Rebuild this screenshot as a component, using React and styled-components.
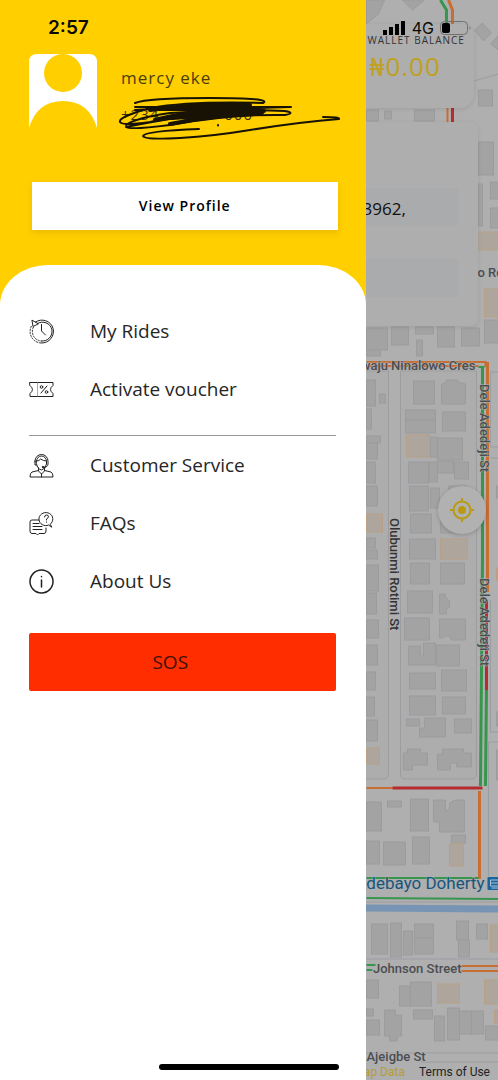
import React from "react";
import styled, { createGlobalStyle } from "styled-components";

const GlobalStyle = createGlobalStyle`
  *, *::before, *::after { box-sizing: border-box; }
  body { margin: 0; background: #fff; font-family: "Open Sans", "Noto Sans", sans-serif; color: #222; }
`;

const Screen = styled.div`
  position: relative;
  display: flex;
  min-height: 100vh;
  overflow: hidden;
`;

const StatusBar = styled.div`
  position: absolute;
  z-index: 3;
  inset: 0 0 auto 0;
  display: flex;
  align-items: center;
  justify-content: space-between;
  padding: 16px 26px 0 48px;
  height: 40px;
  color: #0a0a05;
`;

const Clock = styled.time`
  font: 600 19px/24px Inter, sans-serif;
`;

const Signals = styled.div`
  display: flex;
  align-items: center;
  gap: 6px;
  font: 400 16px/24px Inter, sans-serif;
`;

const HomeIndicator = styled.div`
  position: absolute;
  z-index: 3;
  bottom: 10px;
  left: 32%;
  width: 36%;
  height: 6px;
  border-radius: 3px;
  background: #000;
`;

const Drawer = styled.aside`
  flex: 0 0 73.4%;
  display: flex;
  flex-direction: column;
  background: #fff;
`;

const ProfileHeader = styled.header`
  padding: 54px 28px 75px 29px;
  margin-bottom: -40px;
  background: #ffcf00;
`;

const Profile = styled.div`
  display: flex;
  gap: 24px;
  height: 88px;
`;

const Identity = styled.div`
  position: relative;
  flex: 1;
  padding-top: 12px;
`;

const Name = styled.h1`
  margin: 0;
  font-size: 17px;
  line-height: 24px;
  font-weight: 400;
  letter-spacing: 1px;
  color: #4b3d0a;
`;

const Phone = styled.p`
  display: flex;
  justify-content: space-between;
  width: 132px;
  margin: 12px 0 0;
  font-size: 15px;
  line-height: 24px;
  letter-spacing: 1px;
  color: #3d3208;
`;

const Scribble = styled.svg`
  position: absolute;
  left: -4px;
  top: 40px;
  width: 226px;
  height: 48px;
  overflow: visible;
`;

const ProfileButton = styled.button`
  display: block;
  width: calc(100% - 3px);
  height: 48px;
  margin: 40px 0 0 3px;
  border: 0;
  background: #fff;
  box-shadow: 0 3px 6px rgba(160, 110, 0, 0.2);
  font: 600 14px/24px "Open Sans", sans-serif;
  letter-spacing: 1px;
  color: #000;
`;

const Panel = styled.div`
  flex: 1;
  padding: 37px 30px 40px 29px;
  border-radius: 48px 48px 0 0 / 40px 40px 0 0;
  background: #fff;
`;

const MenuList = styled.ul`
  margin: 0;
  padding: 0;
  list-style: none;
  & + & {
    margin-top: 17px;
    border-top: 1px solid #999;
  }
`;

const MenuLink = styled.a`
  display: flex;
  align-items: center;
  gap: 36px;
  height: 58px;
  font-size: 19px;
  line-height: 28px;
  color: #262626;
  text-decoration: none;
`;

const Icon = styled.svg.attrs({ viewBox: "0 0 25 25", "aria-hidden": true })`
  flex: none;
  width: 25px;
  height: 25px;
  fill: none;
  stroke: #222;
  stroke-width: ${(p) => p.$weight || 1};
  stroke-linecap: round;
  stroke-linejoin: round;
`;

const SosButton = styled.button`
  width: 100%;
  height: 58px;
  margin-top: 23px;
  padding: 0 24px 0 0;
  border: 0;
  border-radius: 2px;
  background: #ff2d00;
  font: 400 19px/28px "Open Sans", sans-serif;
  color: #3a1208;
`;

const MapPane = styled.main`
  position: relative;
  flex: 1;
  min-width: 0;
  display: flex;
  flex-direction: column;
  padding-top: 24px;
  overflow: hidden;
  background: #afafb0;
`;

const MapCanvas = styled.svg`
  position: absolute;
  inset: 0;
  width: 100%;
  height: 100%;
`;

const Card = styled.section`
  position: relative;
  background: #aeaeae;
  box-shadow: 0 1px 4px rgba(0, 0, 0, 0.1);
`;

const WalletCard = styled(Card)`
  height: 84px;
  margin-right: 24px;
  padding: 8px 0 0 2px;
  border-radius: 0 12px 14px 0;
  white-space: nowrap;
`;

const WalletLabel = styled.h2`
  margin: 0;
  font-size: 10px;
  line-height: 16px;
  font-weight: 500;
  letter-spacing: 1px;
  color: #333;
`;

const Balance = styled.p`
  margin: 2px 0 0 2px;
  font-size: 26px;
  line-height: 32px;
  letter-spacing: 1px;
  color: #c0a020;
`;

const TripCard = styled(Card)`
  display: flex;
  flex-direction: column;
  gap: 33px;
  height: 204px;
  margin: 14px 20px 0 0;
  padding: 66px 20px 0 0;
  border-radius: 0 6px 6px 0;
`;

const Field = styled.div`
  height: 38px;
  background: #a9abad;
  border-radius: 0 3px 3px 0;
  font-size: 17px;
  line-height: 42px;
  color: #111;
  text-indent: -3px;
`;

const LocateButton = styled.button`
  position: relative;
  display: grid;
  place-items: center;
  width: 48px;
  height: 48px;
  margin: 160px 12px 0 auto;
  padding: 0;
  border: 0;
  border-radius: 50%;
  background: #b1b1b1;
  box-shadow: 0 1px 4px rgba(0, 0, 0, 0.2);
`;

const MapLinks = styled.footer`
  position: relative;
  display: flex;
  justify-content: flex-end;
  gap: 14px;
  margin-top: auto;
  padding-right: 8px;
  white-space: nowrap;
  font: 400 12px/16px Roboto, sans-serif;
`;

const MapLink = styled.a`
  color: ${(p) => (p.$accent ? "#b79d35" : "#222")};
  text-decoration: none;
`;

const buildings = [
  [366, 110, 12, 11], [384, 111, 7, 8], [414, 110, 20, 11], [478, 90, 14, 16],
  [478, 142, 15, 33], [478, 184, 4, 42], [490, 182, 8, 17], [490, 208, 8, 20],
  [366, 328, 21, 22], [391, 327, 17, 18], [415, 327, 18, 7], [437, 327, 17, 20],
  [461, 328, 18, 18], [484, 320, 14, 23], [416, 340, 6, 16], [366, 350, 14, 6],
  [366, 380, 9, 26], [379, 394, 6, 9], [366, 409, 5, 20], [366, 436, 14, 7], [366, 443, 11, 16],
  [366, 462, 9, 21], [366, 486, 11, 20], [366, 538, 9, 10], [366, 550, 11, 9],
  [413, 381, 21, 23], [405, 410, 30, 10], [405, 420, 30, 13], [442, 412, 23, 19],
  [430, 437, 7, 20], [437, 438, 25, 22], [408, 462, 20, 21], [429, 462, 8, 20],
  [437, 461, 16, 12], [454, 462, 14, 17], [409, 486, 19, 25], [430, 488, 9, 20],
  [448, 486, 18, 14], [440, 514, 24, 19], [410, 514, 21, 19], [409, 539, 26, 20],
  [366, 565, 12, 26], [366, 593, 10, 21], [366, 620, 12, 18], [366, 645, 11, 20],
  [366, 672, 9, 18], [366, 697, 8, 19], [366, 720, 11, 21],
  [410, 563, 19, 21], [440, 563, 24, 21], [407, 591, 25, 22], [404, 618, 25, 22],
  [436, 645, 23, 21], [409, 673, 26, 16], [441, 670, 25, 21],
  [409, 696, 26, 19], [442, 697, 23, 17], [406, 719, 13, 7], [454, 719, 17, 14],
  [366, 802, 15, 29], [387, 801, 14, 6], [410, 799, 18, 32], [366, 841, 13, 23],
  [383, 842, 22, 23], [412, 837, 17, 27], [451, 835, 14, 8],
  [371, 924, 16, 30], [390, 923, 11, 34], [403, 931, 9, 24], [414, 924, 19, 14], [414, 938, 19, 16],
  [456, 921, 12, 19], [458, 940, 11, 17], [476, 924, 11, 15], [366, 980, 12, 18],
  [399, 986, 11, 20], [410, 982, 21, 24], [366, 1020, 13, 15], [366, 1009, 7, 7],
  [413, 1010, 19, 9], [434, 1016, 10, 25], [447, 1008, 12, 32],
  [459, 1011, 12, 23], [471, 1011, 12, 23], [485, 1026, 13, 14],
  [496, 486, 2, 12], [496, 712, 2, 14], [496, 750, 2, 30],
];

const shops = [
  [476, 232, 22, 18], [484, 289, 14, 28], [406, 435, 23, 22], [366, 514, 16, 18],
  [440, 539, 27, 20], [366, 748, 13, 16], [449, 844, 14, 22], [490, 925, 8, 27],
  [437, 984, 22, 19], [484, 980, 14, 24], [494, 1010, 4, 13], [496, 568, 2, 12],
];

const blocks = [
  "M366 0h18l-6 14-12 10z", "M402 0h22l-12 10z", "M498 50l-8-6 8-9z", "M474 30l8-7 9 10-8 8z",
  "M441 384l5-2v-2h11v2l8 2v20h-24z",
  "M439 594h6v3l4 4v6l-3 2v5h-7z",
  "M439 619h26v21h-14l-2-4h-5l-2 2h-3z",
  "M408 646h12v10h3v-13h12v22h-27z",
  "M424 718h21v19h-26v-9h5z",
  "M407 749h13v4h7v12h-15v5h-9v-17h4z",
  "M442 749h21v4h8v14h-15v-4h-6v7h-13v-16h5z",
  "M433 800h12v10h4v-7l6-3h9v32h-25v-10h-6z",
  "M384 1010h11v5h6v21h-4v5h-8v-5h-5z",
];

const traffic = [
  ["#37964d", 3, "M440 0l6 10v14M482 368V560L480 786M486 690l-1 96"],
  ["#c96e32", 3, "M448 0l4 10v14M487 362v230M479 791v88"],
  ["#c96e32", 2, "M447 108v14M366 362h119v5M366 366h112M366 788h26M461 966h37M461 971h37"],
  ["#b62c2e", 3, "M452 108v14M486 600v90M392 788h90"],
  ["#37964d", 2, "M366 878h112M478 367h6M366 898l132 1M366 965h9M366 970h6"],
];

const Map = () => (
  <MapCanvas viewBox="365 0 133 1080" preserveAspectRatio="xMaxYMin slice" role="img" aria-label="Map with traffic">
    <g fill="#b1b1b2" stroke="#9b9da0" strokeWidth="1">
      <path d="M388 371v403q0 5-5 5h-20v-408zM400 371h76v403q0 5-5 5h-66q-5 0-5-5z" fill="#adadae" />
      <path d="M498 372h-8v75h8M490 458h8M490 600v132h8M498 742h-10v134M470 82l28-8M360 1053h138M420 1062h78" fill="none" />
    </g>
    <g fill="#a3a3a4" stroke="#9b9c9d" strokeWidth="1">
      {buildings.map(([x, y, w, h]) => <rect key={`${x}-${y}`} x={x} y={y} width={w} height={h} />)}
      {blocks.map((d) => <path key={d} d={d} />)}
    </g>
    <g fill="#aea69c" stroke="#b8a085" strokeWidth="1">
      {shops.map(([x, y, w, h]) => <rect key={`${x}-${y}`} x={x} y={y} width={w} height={h} />)}
    </g>
    <path d="M365 908l133 1" stroke="#7894b4" strokeWidth="7" />
    <path d="M365 902h133M365 959h133" stroke="#999da2" />
    {traffic.map(([color, width, d]) => (
      <path key={color + width} d={d} fill="none" stroke={color} strokeWidth={width} />
    ))}
    <g fontFamily="Roboto, sans-serif" fontSize="13" fontWeight="500" fill="#4b4d50" stroke="#b0b0b0" strokeWidth="1" paintOrder="stroke">
      <text x="475" y="370" textAnchor="end">Adewaju Ninalowo Cres</text>
      <text x="477" y="277">o Ronke</text>
      <text transform="translate(480 384) rotate(90)">Dele Adedeji St</text>
      <text transform="translate(480 578) rotate(90)">Dele Adedeji St</text>
      <text transform="translate(390 518) rotate(90)" fill="#333">Olubunmi Rotimi St</text>
      <text x="461" y="973" textAnchor="end">Johnson Street</text>
      <text x="366" y="1061">Ajeigbe St</text>
      <text x="484" y="889" textAnchor="end" fontSize="17" fontWeight="400" fill="#17557d">Adebayo Doherty</text>
    </g>
    <rect x="487" y="877" width="14" height="13" rx="1" fill="#1765a0" />
    <path d="M490 880h8v6h-8zM491 888h7M490 883h8" fill="none" stroke="#b5c3cf" />
  </MapCanvas>
);

const Avatar = () => (
  <svg width="68" height="74" viewBox="0 0 68 74" role="img" aria-label="Profile picture">
    <path d="M0 74V8q0-8 8-8h52q8 0 8 8v66Q60 47 34 47T0 74z" fill="#fff" />
    <circle cx="34" cy="19" r="19" fill="#ffcf00" />
  </svg>
);

const RidesIcon = () => (
  <Icon>
    <path d="M6.500 3A11.500 11.500 0 1 1 12.500 24" />
    <path d="M8.500 4.500A9.500 9.500 0 1 1 12.500 22" />
    <path d="M2.500 7A11.500 11.500 0 0 0 12.500 24M4.500 8A9.500 9.500 0 0 0 12.500 22" strokeDasharray="2 1" strokeLinecap="butt" />
    <path d="M3 1.500L4 7.500l5-2.500zM12.500 5.500V12l4 4" />
  </Icon>
);

const VoucherIcon = () => (
  <Icon>
    <path d="M1 5.500h23v3q-5 4 0 8v3H1v-3q5-4 0-8z" />
    <path d="M8.500 6v13" stroke="#aaa" />
    <path d="M18 9l-6 7" />
    <circle cx="12.500" cy="10" r="1.300" />
    <circle cx="17.500" cy="15" r="1.300" />
  </Icon>
);

const ServiceIcon = () => (
  <Icon>
    <path d="M6 9V8a6.500 6.500 0 0 1 13 0v3q0 3-4 3.500" />
    <path d="M7.500 8a5 5 0 0 1 10 0M7.500 8q3 0 4-2 3 2 6 2v3q-1 5-5 6-4-1-5-6zM6 8v4h1.500" />
    <path d="M9.500 15v3l3 3 3-3v-3M9.500 17.500L3 19q-2 1-2 5h23q0-4-2-5l-6.500-1.500M12.500 21v3" />
    <circle cx="14" cy="14" r="0.800" fill="#222" />
  </Icon>
);

const FaqIcon = () => (
  <Icon>
    <path d="M10 9H3Q1 9 1 11v9q0 2.500 2 2.500h4L8.500 24l1.500-1.500h5q2 0 2-2.500v-3M4 12.500h6M4 15.500h9M4 18.500h9" />
    <path d="M21.500 13A7 6.500 0 1 0 18 14.500l1.500-.5 3 2z" />
    <path d="M15.500 6q0-2 2-2t2 1.800q0 1-2 2.200v1M17.500 11v.300" />
  </Icon>
);

const InfoIcon = () => (
  <Icon $weight={1.5}>
    <circle cx="12.500" cy="12.500" r="11.500" />
    <path d="M12.500 11v7M12.500 7.500v.300" />
  </Icon>
);

const MenuItem = ({ icon, children }) => (
  <li><MenuLink href="#">{icon}{children}</MenuLink></li>
);

export default function App() {
  return (
    <Screen>
      <GlobalStyle />
      <StatusBar>
        <Clock>2:57</Clock>
        <Signals>
          <svg width="23" height="14" viewBox="0 0 23 14" aria-label="Signal" role="img">
            <path d="M0 9h4v5H0zM6 6h4v8H6zM12 3h4v11h-4zM18 0h4v14h-4z" />
          </svg>
          4G
          <svg width="32" height="14" viewBox="0 0 32 14" aria-label="Battery" role="img">
            <rect x="0.500" y="0.500" width="27" height="13" rx="4" fill="none" stroke="#707070" />
            <rect x="2" y="2" width="8" height="10" rx="2" />
            <path d="M29.500 5q2 2 0 4z" fill="#707070" />
          </svg>
        </Signals>
      </StatusBar>

      <Drawer>
        <ProfileHeader>
          <Profile>
            <Avatar />
            <Identity>
              <Name>mercy eke</Name>
              <Phone><span>+234</span><span>000</span></Phone>
              <Scribble viewBox="117 94 226 48" fill="none" stroke="#171204" strokeLinecap="round" strokeLinejoin="round" aria-hidden="true">
                <path strokeWidth="2" d="M135 103Q147 98 210 98T263 103Q190 101 150 108 118 117 120 122 122 126 150 122 210 108 291 107L135 107M135 110Q200 106 245 107M250 106Q160 120 126 127 130 130 170 125 230 114 285 115 296 113 285 111 240 109 170 113 135 118 126 125" />
                <path strokeWidth="4" d="M150 110Q210 102 250 105 190 111 155 120 210 110 264 111M170 124Q210 116 262 113 220 114 172 118M160 109L248 109" />
                <path strokeWidth="2" d="M199 129Q145 131 143 136 144 140 180 138 214 136 250 130 300 122 339 119 340 117 323 117M218 125v.500" />
              </Scribble>
            </Identity>
          </Profile>
          <ProfileButton type="button">View Profile</ProfileButton>
        </ProfileHeader>
        <Panel>
          <nav aria-label="Main menu">
            <MenuList>
              <MenuItem icon={<RidesIcon />}>My Rides</MenuItem>
              <MenuItem icon={<VoucherIcon />}>Activate voucher</MenuItem>
            </MenuList>
            <MenuList>
              <MenuItem icon={<ServiceIcon />}>Customer Service</MenuItem>
              <MenuItem icon={<FaqIcon />}>FAQs</MenuItem>
              <MenuItem icon={<InfoIcon />}>About Us</MenuItem>
            </MenuList>
          </nav>
          <SosButton type="button">SOS</SosButton>
        </Panel>
      </Drawer>

      <MapPane>
        <Map />
        <WalletCard>
          <WalletLabel>WALLET BALANCE</WalletLabel>
          <Balance>₦0.00</Balance>
        </WalletCard>
        <TripCard>
          <Field>3962,</Field>
          <Field />
        </TripCard>
        <LocateButton type="button" aria-label="Show my location">
          <svg width="26" height="26" viewBox="0 0 26 26" fill="none" stroke="#b99a12" strokeWidth="2" aria-hidden="true">
            <circle cx="13" cy="13" r="8.500" />
            <circle cx="13" cy="13" r="4" fill="#b99a12" stroke="none" />
            <path d="M13 1v4M13 21v4M1 13h4M21 13h4" />
          </svg>
        </LocateButton>
        <MapLinks>
          <MapLink href="#" $accent>Map Data</MapLink>
          <MapLink href="#">Terms of Use</MapLink>
        </MapLinks>
      </MapPane>
      <HomeIndicator />
    </Screen>
  );
}
